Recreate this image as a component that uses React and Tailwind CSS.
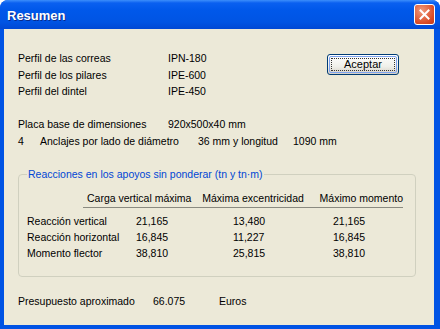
import React from 'react';

const font = { fontFamily: '"Liberation Sans", Arial, sans-serif' };

function Row({ children, h = 'h-[16.5px]' }) {
  return <div className={`flex items-center ${h} whitespace-nowrap`}>{children}</div>;
}

export default function App() {
  const reacciones = [
    ['Reacción vertical', '21,165', '13,480', '21,165'],
    ['Reacción horizontal', '16,845', '11,227', '16,845'],
    ['Momento flector', '38,810', '25,815', '38,810'],
  ];

  return (
    <div className="w-[440px] h-[329px] bg-white" style={font}>
      <div className="w-[440px] h-[329px] flex flex-col rounded-t-[8px] bg-[#0053E4] overflow-hidden">
        {/* title bar */}
        <div className="h-[29px] shrink-0 flex items-center pl-[7px] pr-[5px] bg-[linear-gradient(#3C8EFB_0px,#0A60F0_3px,#0058EA_10px,#0054E3_22px,#0048D4_29px)]">
          <div className="text-white font-bold text-[13px] [text-shadow:1px_1px_0_#0A2A8A] pt-[2px]">Resumen</div>
          <div className="ml-auto w-[21px] h-[21px] rounded-[3px] border border-white bg-[radial-gradient(circle_at_35%_30%,#F09A7C,#D94A25_70%,#C13A18)] flex items-center justify-center">
            <svg width="11" height="11" viewBox="0 0 11 11">
              <path d="M1.5 1.5 L9.5 9.5 M9.5 1.5 L1.5 9.5" stroke="#fff" strokeWidth="2" strokeLinecap="square" />
            </svg>
          </div>
        </div>

        {/* client area */}
        <div className="flex-1 ml-[4px] mr-[6px] mb-[4px] bg-[#ECE9D8] text-[10.5px] text-black pl-[14px] pt-[22px]">
          <div className="flex">
            <div className="w-[200px] flex flex-col">
              <Row><span className="w-[150px]">Perfil de las correas</span><span>IPN-180</span></Row>
              <Row><span className="w-[150px]">Perfil de los pilares</span><span>IPE-600</span></Row>
              <Row><span className="w-[150px]">Perfil del dintel</span><span>IPE-450</span></Row>
            </div>
            <div className="ml-[109px] mt-[3px] w-[72px] h-[21px] rounded-[3px] border border-[#003C74] bg-[linear-gradient(#FFFFFF,#F0F0EA_60%,#D6D0C5)] p-[1px]">
              <div className="w-full h-full rounded-[2px] border border-[#7EA2EF] p-[1px]">
                <div className="w-full h-full flex items-center justify-center border border-dotted border-[#333] text-[11px]">Aceptar</div>
              </div>
            </div>
          </div>

          <div className="mt-[16.5px] flex flex-col">
            <Row><span className="w-[150px]">Placa base de dimensiones</span><span>920x500x40 mm</span></Row>
            <Row>
              <span className="w-[22px]">4</span>
              <span className="w-[158px]">Anclajes por lado de diámetro</span>
              <span className="w-[95px]">36 mm y longitud</span>
              <span>1090 mm</span>
            </Row>
          </div>

          <fieldset className="mt-[17px] w-[398px] border border-[#D0D0BF] rounded-[4px] pl-[8px] pr-[8px] pb-[14px]">
            <legend className="px-[1px] text-[#0046D5] leading-[14px]">Reacciones en los apoyos sin ponderar (tn y tn·m)</legend>
            <div className="mt-[10px] ml-[56px] w-[320px] flex border-b border-[#8A8A80] h-[16.5px] items-center whitespace-nowrap">
              <span className="w-[120px] pl-[4px]">Carga vertical máxima</span>
              <span className="w-[118px]">Máxima excentricidad</span>
              <span>Máximo momento</span>
            </div>
            <div className="mt-[6px] flex flex-col">
              {reacciones.map((r) => (
                <Row key={r[0]} h="h-[16px]">
                  <span className="w-[109px]">{r[0]}</span>
                  <span className="w-[97px]">{r[1]}</span>
                  <span className="w-[100px]">{r[2]}</span>
                  <span>{r[3]}</span>
                </Row>
              ))}
            </div>
          </fieldset>

          <div className="mt-[17px]">
            <Row>
              <span className="w-[135px]">Presupuesto aproximado</span>
              <span className="w-[66px]">66.075</span>
              <span>Euros</span>
            </Row>
          </div>
        </div>
      </div>
    </div>
  );
}
